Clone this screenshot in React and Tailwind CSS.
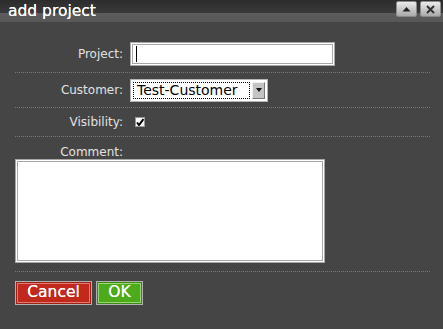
import React from 'react';

// --- title bar button (minimise / close) ---
const TitleButton = ({ children }) => (
  <div className="flex h-4 w-[21px] items-center justify-center rounded-[2px] border border-[#8a8a8a] bg-gradient-to-b from-[#ececec] to-[#a9a9a9]">
    {children}
  </div>
);

// --- one labelled form row ---
const Row = ({ label, children, className = '' }) => (
  <div className={`flex items-center border-b border-dotted border-[#777] ${className}`}>
    <div className="w-[109px] shrink-0 pr-[1px] text-right text-[12px] leading-[14px] text-[#e2e2e2]">{label}</div>
    <div className="ml-[6px] flex items-center">{children}</div>
  </div>
);

export default function App() {
  return (
    <div className="h-[329px] w-[443px] bg-[#454545] font-['DejaVu_Sans',sans-serif]">
      {/* title bar */}
      <div className="flex h-[22px] items-start justify-between bg-[linear-gradient(to_bottom,#2c2c2c_0px,#3a3a3a_13px,#5c5c5c_13px,#585858_22px)] pl-2 pr-[2px]">
        <span className="pt-[4px] text-[15.5px] leading-none text-white [text-shadow:0_0_0.4px_#fff]">add project</span>
        <div className="flex gap-[3px] pt-[1px]">
          <TitleButton>
            <svg width="9" height="6" viewBox="0 0 9 6">
              <path d="M0.5 5.5 L4.5 1 L8.5 5.5 Z" fill="#222" />
            </svg>
          </TitleButton>
          <TitleButton>
            <svg width="9" height="9" viewBox="0 0 9 9">
              <path d="M1 1 L8 8 M8 1 L1 8" stroke="#333" strokeWidth="2" />
            </svg>
          </TitleButton>
        </div>
      </div>

      {/* form */}
      <div className="ml-[15px] mr-[13px]">
        <Row label="Project:" className="h-[51px] pt-[14px]">
          <div className="flex h-[24px] w-[205px] items-center border-[3px] border-double border-[#a8a8a8] bg-white pl-[3px]">
            <div className="h-[16px] w-px bg-black" />
          </div>
        </Row>

        <Row label="Customer:" className="h-[35px]">
          <div className="flex h-[23px] w-[138px] items-center border border-[#b5b5b5] bg-white p-[2px]">
            <div className="flex h-full flex-1 items-center border border-dotted border-black pl-[3px] text-[14px] leading-none text-black">
              Test-Customer
            </div>
            <div className="ml-[2px] flex h-full w-[13px] items-center justify-center border border-[#eee] border-r-[#777] border-b-[#777] bg-[#c4c4c4]">
              <svg width="6" height="4" viewBox="0 0 6 4">
                <path d="M0 0 L6 0 L3 4 Z" fill="#111" />
              </svg>
            </div>
          </div>
        </Row>

        <Row label="Visibility:" className="h-[29px]">
          <div className="ml-[5px] flex h-[10px] w-[10px] items-center justify-center border border-[#999] bg-white">
            <svg width="8" height="8" viewBox="0 0 8 8">
              <path d="M1 4.5 L3 7 L7.5 1" stroke="#000" strokeWidth="2" fill="none" />
            </svg>
          </div>
        </Row>

        <div className="h-[135px] border-b border-dotted border-[#777] pt-[8px]">
          <div className="w-[109px] pr-[1px] text-right text-[12px] leading-[14px] text-[#e2e2e2]">Comment:</div>
          <div className="h-[104px] w-[310px] border-[3px] border-double border-[#a8a8a8] bg-white" />
        </div>

        {/* actions */}
        <div className="flex gap-[4px] pt-[9px]">
          <button className="flex h-[24px] w-[77px] items-center justify-center border border-[#b0b0b0] bg-[#c0291c] text-[15.5px] leading-none text-white shadow-[inset_0_0_0_1px_#9e1f14,inset_0_0_0_2px_#de7d74] [text-shadow:0_0_0.4px_#fff]">
            Cancel
          </button>
          <button className="flex h-[24px] w-[47px] items-center justify-center border border-[#b0b0b0] bg-[#4caa1b] text-[15.5px] leading-none text-white shadow-[inset_0_0_0_1px_#3a8a12,inset_0_0_0_2px_#9ad37a] [text-shadow:0_0_0.4px_#fff]">
            OK
          </button>
        </div>
      </div>
    </div>
  );
}
